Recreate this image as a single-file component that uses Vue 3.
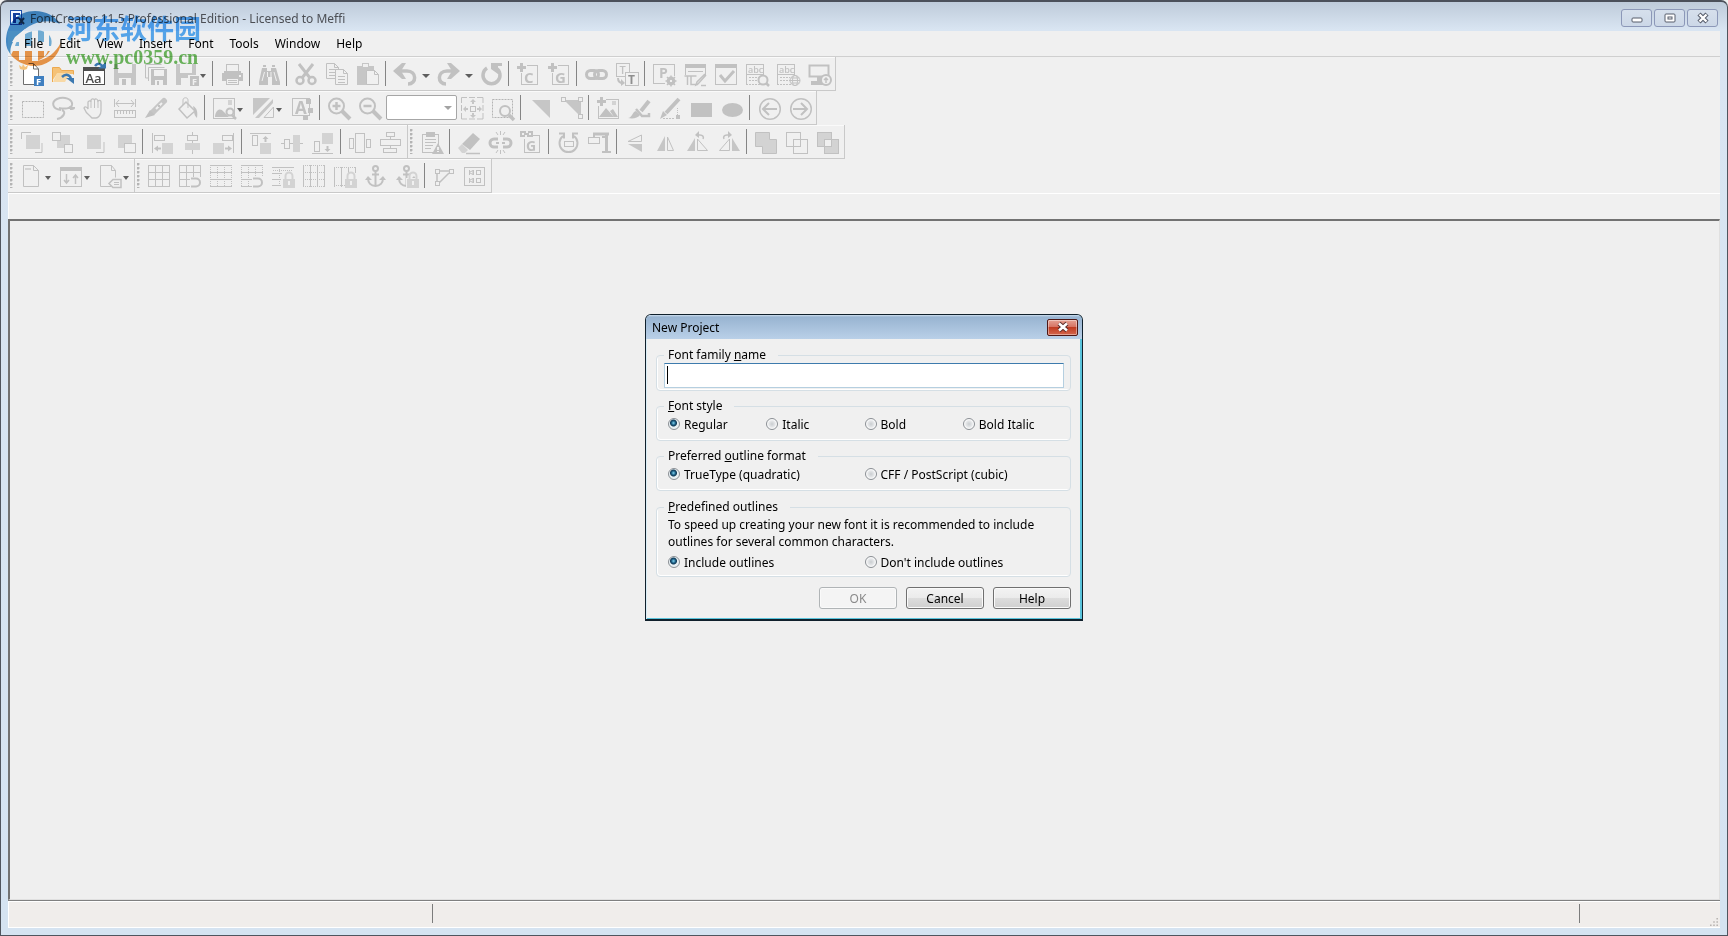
<template>
  <div class="window">
    <header class="titlebar">
      <svg class="app-icon" viewBox="0 0 16 16" aria-hidden="true">
        <rect x="0.5" y="0.5" width="11" height="14" fill="#f4f8ff" stroke="#1d4fa8" />
        <path d="M3 3h7v2H6v2h3v2H6v4H3z" fill="#12409c" />
        <path d="M9 8l5 6M14 8l-5 6" stroke="#2b3f55" stroke-width="2" />
      </svg>
      <h1>FontCreator 11.5 Professional Edition - Licensed to Meffi</h1>
      <div class="caption-buttons">
        <button v-for="c in captions" :key="c.label" type="button" :aria-label="c.label">
          <svg viewBox="0 0 14 12" aria-hidden="true" v-html="c.art"></svg>
        </button>
      </div>
    </header>

    <div class="client">
      <nav class="menubar" aria-label="Main menu">
        <button v-for="m in menus" :key="m" type="button">{{ m }}</button>
      </nav>

      <div v-for="(row, r) in rows" :key="r" class="toolbar-row">
        <div v-for="(bar, b) in row" :key="b" class="toolbar" role="toolbar">
          <span class="grip"></span>
          <template v-for="(item, i) in bar" :key="i">
            <span v-if="item === '|'" class="sep"></span>
            <span v-else-if="item === 'zoomBox'" class="zoom-box">
              <select v-model="zoomLevel" aria-label="Zoom level">
                <option value=""></option>
                <option value="100">100%</option>
              </select>
            </span>
            <button
              v-else
              type="button"
              :class="['tool', { drop: item.endsWith('>'), wide: item.endsWith('>>') }]"
              :aria-label="iconName(item)"
            >
              <svg class="glyph" viewBox="0 0 23 23" aria-hidden="true" v-html="icons[iconName(item)]"></svg>
            </button>
          </template>
        </div>
      </div>

      <div class="tab-strip"></div>
      <main class="workspace"></main>

      <footer class="statusbar">
        <span class="pane first"></span>
        <span class="pane middle"></span>
        <span class="pane last"></span>
        <svg class="size-grip" viewBox="0 0 10 10" aria-hidden="true">
          <path d="M8 0h2v2H8zM8 4h2v2H8zM4 4h2v2H4zM8 8h2v2H8zM4 8h2v2H4zM0 8h2v2H0z" fill="#b9b5b2" />
        </svg>
      </footer>
    </div>

    <div class="overlay">
      <form class="dialog" role="dialog" aria-labelledby="dialog-title" @submit.prevent>
        <div class="dialog-title">
          <h2 id="dialog-title">New Project</h2>
          <button type="button" class="dialog-close" aria-label="Close">
            <svg viewBox="0 0 14 12" aria-hidden="true">
              <path d="M3 2.5l8 7M11 2.5l-8 7" stroke="#5a2a28" stroke-width="4.4" />
              <path d="M3 2.5l8 7M11 2.5l-8 7" stroke="#fff" stroke-width="2.6" />
            </svg>
          </button>
        </div>
        <div class="dialog-body">
          <fieldset class="name-group">
            <legend><label for="family">Font family <u>n</u>ame</label></legend>
            <div class="name-field">
              <input id="family" v-model="family" type="text" />
            </div>
          </fieldset>

          <fieldset>
            <legend><u>F</u>ont style</legend>
            <div class="radios four">
              <label v-for="s in styles" :key="s"><input v-model="style" type="radio" name="style" :value="s" />{{ s }}</label>
            </div>
          </fieldset>

          <fieldset>
            <legend>Preferred <u>o</u>utline format</legend>
            <div class="radios two">
              <label v-for="f in formats" :key="f"><input v-model="format" type="radio" name="format" :value="f" />{{ f }}</label>
            </div>
          </fieldset>

          <fieldset class="outline-group">
            <legend><u>P</u>redefined outlines</legend>
            <p>To speed up creating your new font it is recommended to include outlines for several common characters.</p>
            <div class="radios two">
              <label v-for="o in outlineChoices" :key="o"><input v-model="outlines" type="radio" name="outlines" :value="o" />{{ o }}</label>
            </div>
          </fieldset>

          <div class="actions">
            <button type="submit" :disabled="!family">OK</button>
            <button type="button">Cancel</button>
            <button type="button">Help</button>
          </div>
        </div>
      </form>
    </div>

    <div class="watermark">
      <svg class="wm-logo" viewBox="0 0 56 56" aria-hidden="true">
        <path d="M0 31C0 12 12 0 29 0c11 0 20 5 25 13-12-6-30-2-40 10C8 30 4 38 5 44 2 40 0 36 0 31z" fill="#2f86c6" />
        <path d="M5 44C2 34 12 20 27 15c12-4 24-1 27 7 2 9-6 21-20 26 8-6 13-14 11-20-3-7-15-6-24 1C13 34 9 41 11 48z" fill="#fff" />
        <path d="M10 32C15 24 26 18 36 20c8 2 11 8 9 15H9z" fill="#5fa9da" />
        <path d="M7 40h37c-3 5-8 8-13 10 10-2 19-8 24-19-1 13-12 24-27 24C18 55 9 49 5 44z" fill="#f08a2c" />
        <path d="M9 26l10-8v31h-6V31H6zM26 18h6v13h6V20h5v16c-1 5-3 8-5 10V38h-6v12h-6z" fill="#fff" />
      </svg>
      <div class="wm-text">
        <strong>河东软件园</strong>
        <span>www.pc0359.cn</span>
      </div>
    </div>
  </div>
</template>

<script setup>
import { ref } from "vue";

const family = ref("");
const style = ref("Regular");
const format = ref("TrueType (quadratic)");
const outlines = ref("Include outlines");
const zoomLevel = ref("");

const menus = ["File", "Edit", "View", "Insert", "Font", "Tools", "Window", "Help"];
const styles = ["Regular", "Italic", "Bold", "Bold Italic"];
const formats = ["TrueType (quadratic)", "CFF / PostScript (cubic)"];
const outlineChoices = ["Include outlines", "Don't include outlines"];

const DARK = "#c1c1c1";
const LIGHT = "#d3d3d3";
const BG = "#f0f0f0";

// small builders for the icon markup: fill, stroke, rectangle, letter
const f = (d, c = DARK) => `<path d="${d}" fill="${c}"/>`;
const s = (d, w = 1, c = DARK, extra = "") => `<path d="${d}" fill="none" stroke="${c}" stroke-width="${w}" ${extra}/>`;
const box = (x, y, w, h, fill = "none", c = DARK) =>
  `<rect x="${x + 0.5}" y="${y + 0.5}" width="${w - 1}" height="${h - 1}" fill="${fill}" stroke="${c}"/>`;
const letter = (t, x, y, size, c = DARK, weight = 700) =>
  `<text x="${x}" y="${y}" font-size="${size}" font-weight="${weight}" font-family="Open Sans, sans-serif" fill="${c}">${t}</text>`;
const dash = 'stroke-dasharray="2 1"';
const dots = 'stroke-dasharray="1 1"';

const lock = f("M11 14h12v9H11z", LIGHT) + s("M13.5 14v-3a3.500 3.500 0 0 1 7 0v3", 2, LIGHT) + f("M16 16h2v4h-2z", BG);
const magnet = f("M11 12h12v11H11z", BG) + s("M12 13.500h5a4 4 0 0 1 0 8h-5", 2);
const anchor = (x) =>
  `<g transform="translate(${x} 0)">` +
  s("M10.5 6v15M7 9.500h7", 2) + s("M3 13c0 5 3 8 7.500 8s7.500-3 7.500-8", 2) +
  `<circle cx="10.500" cy="3.500" r="2.500" fill="none" stroke="${DARK}" stroke-width="2"/>` +
  f("M0 15l3-4 4 4zM14 15l4-4 3 4z") + "</g>";
const rows5 = "M0 .5h22M0 7.500h22M0 14.500h22M0 21.500h22";
const cols5 = "M.5 0v22M7.500 0v22M14.500 0v22M21.500 0v22";
const lens = (x, y, r) => `<circle cx="${x}" cy="${y}" r="${r}" fill="${BG}" stroke="${DARK}" stroke-width="2"/>`;
const page = "M2.500 .5h10l5 5v16h-15zM12.500 .5v5h5";
const plus = f("M3 0h3v3h3v3H6v3H3V6H0V3h3z");

const icons = {
  New:
    `<path d="M2.500 4v17.500h15V6l-5-5.500h-5" fill="#fff" stroke="#6d6d6d"/>` + s("M12.500 1v5h5", 1, "#6d6d6d") +
    f("M13 13h10v10H13z", "#3f7fc0") + letter("F", 15, 21.500, 9.500, "#fff") +
    f("M-2 2l3 2 1-3 2 3 3-2-1 4-3 1-4-1z", "#f3c27c"),
  Open:
    f("M0 5h8l2 3h11v3H5L0 18z", "#f5c277") + f("M5 10h13l-5 9H1z", "#f8d9a6") + s("M.5 19V4.500h7l2 3h12v4", 1, "#eda94e") +
    s("M10 14c4-4 8-2 9 2", 2.500, "#3b78b0") + f("M14 15h8v6z", "#3b78b0"),
  "Font Overview":
    `<rect x=".5" y="5.500" width="21" height="16" fill="#fff" stroke="#4d4d4d"/>` + f("M0 4h22v4H0z", "#4d4d4d") +
    letter("Aa", 2.500, 20, 13, "#4d4d4d", 600) + s("M12 3c3-4 6-2 8 1", 2.500, "#3b78b0") + f("M15 5.500h8V-1z", "#3b78b0"),
  Save: f("M0 1h22v21H0z", "#c6c6c6") + f("M4 1h14v9H4zM5 15h12v7H5z", BG) + f("M8 16h4v6H8z"),
  "Save All":
    s("M.5 15V1.500h16M3.500 18V4.500h16M.5 15h3") + f("M6 6h16v16H6z") + f("M9 7h10v6H9zM10 17h8v5h-8z", BG) + f("M12 18h2v4h-2z"),
  "Export Font":
    f("M0 1h20v21H0z", "#c6c6c6") + f("M4 1h12v9H4zM5 15h8v7H5z", BG) + f("M12 12h11v11H12z", BG) + f("M14 13h9v10h-9z") + letter("F", 16, 21.500, 9, BG),
  Print:
    box(5, 1, 13, 8) + f("M3 8h17v3H3zM1 10h21v8h-4v-3H5v3H1z") + box(5, 15, 13, 7, BG) + s("M7 17.500h9M7 19.500h9") + f("M18 12h2v2h-2z", BG),
  Find:
    f("M4 5h5v3h4V5h5l4 14v3h-8v-8h-4v8H1v-3z") + f("M5 2h3v2H5zM14 2h3v2h-3z") + s("M6.500 9L4 18M16 9l2.500 9M9.500 9v5M13 9v5", 1, BG),
  Cut:
    s("M4 1l11 14M18 1L7 15", 3) +
    `<circle cx="5" cy="17.500" r="3.500" fill="none" stroke="${DARK}" stroke-width="2.500"/><circle cx="17" cy="17.500" r="3.500" fill="none" stroke="${DARK}" stroke-width="2.500"/>`,
  Copy:
    s("M.5 .5h8l4 4v11H.5zM8.500 .5v4h4M3 6.500h7M3 9.500h7M3 12.500h7") +
    `<path d="M9.500 6.500h8l4 4v11h-12z" fill="${BG}" stroke="${DARK}"/>` + s("M17.500 6.500v4h4M12 13.500h7M12 16.500h7M12 19.500h7"),
  Paste:
    f("M0 3h5V0h7v3h5v19H0z", "#c6c6c6") + f("M6 1h5v3H6z", BG) + `<path d="M9.500 7.500h8l4 4v10h-12z" fill="${BG}" stroke="${DARK}"/>` + s("M17.500 7.500v4h4"),
  Undo: s("M4 8h9c10 0 10 13 1 13", 3.5) + f("M-1 8l9-8h4L7 8l5 8H8z"),
  Redo: s("M18 8H10C0 8 0 21 9 21", 3.5) + f("M23 8L14 0h-4l5 8-5 8h4z"),
  Repeat: s("M7 5a8.500 8.500 0 1 0 9 0", 3.5) + f("M11 0h11v3h-4v8l-7-5z"),
  "Add Character": box(4, 2, 17, 20) + f("M0 0h10v10H0z", BG) + plus + letter("C", 7, 20, 15),
  "Add Glyph": box(4, 2, 17, 20) + f("M0 0h10v10H0z", BG) + plus + letter("G", 7, 20, 15),
  Link:
    `<rect x="1.500" y="7.500" width="12" height="8" rx="4" fill="none" stroke="${DARK}" stroke-width="3"/><rect x="9.500" y="7.500" width="12" height="8" rx="4" fill="none" stroke="${DARK}" stroke-width="3"/>`,
  Transform:
    box(0, 0, 14, 14) + letter("T", 3.500, 11, 11, DARK, 600) + box(9, 9, 14, 14, BG) + letter("T", 12, 21, 12, "#8f8f8f") +
    s("M2 15c0 4 3 5 5 5", 2) + f("M5 16l4 4-4 3z"),
  "Font Properties":
    box(0, 1, 22, 20) + letter("P", 6, 15, 14) + f("M12 13h11v10H12z", BG) +
    `<circle cx="18" cy="18" r="3.200" fill="none" stroke="${DARK}" stroke-width="2.400"/>` + s("M18 12.500v11M12.500 18h11M14 14l8 8M22 14l-8 8", 1.500) + f("M17 17h2v2h-2z", BG),
  Rename: box(1, 1, 21, 20) + f("M1 1h21v4H1z") + s("M4 8.500h15") + f("M0 12h23v11H0z", BG) + s("M3.500 13v9M.5 13h6M12.500 13H7v8.500h7M22 12L14 21l-2 1 1-3 8-8M17 22.500h5", 1.500),
  Validate: box(0, 1, 22, 21) + f("M0 1h22v4H0z") + s("M5 12l5 6 9-10", 3),
  "Text Preview":
    box(0, 1, 18, 11) + letter("abc", 2, 10, 9, DARK, 600) + s("M.5 12v9M17.500 12v3") + s("M3 14.500h10M3 17.500h10M0 21.500h15", 1, DARK, dash) +
    lens(17, 17, 4.500) + s("M20 20l3 3", 2.500),
  "Web Preview":
    box(0, 1, 18, 11) + letter("abc", 2, 10, 9, DARK, 600) + s("M.5 12v9") + s("M3 14.500h10M3 17.500h10M0 21.500h15", 1, DARK, dash) +
    `<circle cx="18" cy="17.500" r="5" fill="${BG}" stroke="${DARK}"/><ellipse cx="18" cy="17.500" rx="2.500" ry="5" fill="none" stroke="${DARK}"/>` + s("M13 17.500h10M14 15h8M14 20h8"),
  Install: s("M1.500 2.500h19v11h-19z", 2) + f("M9 14h4v5H9zM3 18h12v4H3z") + `<circle cx="18" cy="17" r="5" fill="${BG}" stroke="${DARK}" stroke-width="2"/>` + s("M18 20v-5M16 17l2-2 2 2", 1.500),

  "Select Rectangle": s("M1.500 4.500h21v16h-21z", 1, "#b4b4b4", dash),
  Lasso: s("M9 13C0 12-1 5 5 2c7-3 16 0 15 6-1 4-8 4-13 3M20 9c-2 1-3 1-2 2l4 0c0 1-2 1-4 1M10 13c5 2 1 8-5 9", 2),
  Pan: `<path d="M7 19C3 16 2 14 1 11c1-2 3-1 4 1V5c1-2 3-1 3 0V3c1-2 3-1 3.500 0 1-2 3-1 3.500 1 1-1 3-1 3 1v9c0 4-3 7-5 7H9z" fill="${BG}" stroke="${DARK}" stroke-width="1.300"/>` + s("M8 5v6M11.500 3v8M15 4v7"),
  Measure: s("M.5 2v8M21.500 2v8M2 6.500h18M5 3L2 6.500 5 10M17 3l3 3.500-3 3.500") + box(0, 13, 22, 8) + s("M3.500 14v3M6.500 14v3M9.500 14v3M12.500 14v3M15.500 14v3M18.500 14v3"),
  Knife: s("M8 15L19 4", 6, "#c6c6c6", 'stroke-linecap="round"') + f("M0 21l5-8 5 5z") + s("M11 12l6-6", 2, BG) + f("M13 8h2v2h-2z"),
  Fill: s("M3 12l7-7 9 9-8 7z", 1.500) + s("M7 8V3c0-3 5-3 5 0v8") + f("M17 9c4 2 5 6 4 12-2-2-3-4-3-7z"),
  "Background Image": box(0, 1, 22, 21) + f("M2 19c1-6 5-9 9-4l5 5H2z") + f("M15 3h4v5h-4z", LIGHT) + lens(17, 15, 3.500) + s("M19 18l4 4", 2.500),
  "Fill Mode": f("M1 1h17L1 18zM3 21L21 2v4L7 21z", "#c6c6c6") + s("M12 20.500h9.500V10z"),
  "Glyph Outline": box(1, 1, 18, 18) + letter("A", 4, 17, 17) + f("M15 2h5v5h-5zM17 11h5v5h-5zM12 18h5v5h-5z"),
  "Zoom In": lens(8.500, 9, 7.500) + s("M14 14l8 8", 4) + s("M8.500 5v8M4.500 9h8", 2.500),
  "Zoom Out": lens(8.500, 9, 7.500) + s("M14 14l8 8", 4) + s("M4.500 9h8", 2.500),
  "Zoom to Fit":
    s("M.5 6V.5H6M8 .5h6M16 .5h6V6M22 8v6M22 16v6h-6M14 22H8M6 22H.5v-6M.5 14V8") + box(9, 9, 6, 6) +
    f("M9 5l3-3 3 3h-2v2h-2V5zM9 18l3 3 3-3h-2v-2h-2v2zM5 9l-3 3 3 3v-2h2v-2H5zM18 9l3 3-3 3v-2h-2v-2h2z", "#c6c6c6"),
  "Zoom to Selection": s("M.5 2.500h20v18H.5z", 1, "#b4b4b4", dash) + lens(13, 14, 5) + s("M17 18l5 5", 3.500),
  Contour: f("M3 3h18v18z", "#c6c6c6"),
  Point: f("M4 3h17v17z", "#c6c6c6") + box(1, 0, 5, 5, BG) + box(18, 0, 5, 5, BG) + box(18, 17, 5, 5, BG),
  "Insert Image": box(1, 2, 21, 20) + f("M0 0h9v9H0z", BG) + plus + f("M2 20l7-9 8 9zM13 14l3-2 5 8h-4z") + f("M15 4h4v4h-4z", LIGHT),
  Brush: s("M21 4l-8 10", 4) + s("M8 12L14 19h7v-3", 2.5) + f("M0 21c4 0 4-6 8-7l4 4c-2 3-7 4-12 3z"),
  Pencil: s("M20 2L7 16", 4) + f("M1 22l3-8 4 4z") + s("M4 21.500h12", 1, DARK, dash) + s("M18.500 11v8", 1, DARK, dots) + f("M17 18h4v4h-4z"),
  Rectangle: f("M1 6h21v14H1z", "#c2c2c2"),
  Ellipse: `<ellipse cx="11.500" cy="13" rx="10.500" ry="7" fill="#c2c2c2"/>`,
  Previous: `<circle cx="12" cy="12" r="10.300" fill="none" stroke="${DARK}" stroke-width="1.500"/>` + s("M19 12H5M11 6l-6 6 6 6", 2),
  Next: `<circle cx="12" cy="12" r="10.300" fill="none" stroke="${DARK}" stroke-width="1.500"/>` + s("M4 12h14M12 6l6 6-6 6", 2),

  "Bring to Front": f("M5 4h14v14H5z", LIGHT) + s("M.5 8V1.500H10M14 21.500h7V12"),
  "Bring Forward": f("M5 4h13v13H5z", LIGHT) + box(0, 1, 9, 9, BG) + box(12, 13, 9, 9, BG),
  "Send Backward": f("M4 4h14v14H4z", LIGHT) + s("M13 21.500h8V11"),
  "Send to Back": f("M4 4h14v13H4z", LIGHT) + box(10, 12, 12, 10, BG),
  "Align Left": s("M1.500 2v20") + box(3, 4, 11, 6) + f("M11 12h11v11H11z", LIGHT) + f("M3 17.500l4-3v2h3v2H7v2z"),
  "Align Center": s("M10.500 1v22") + box(5, 4, 11, 6, BG) + f("M3 12h15v7H3z", LIGHT),
  "Align Right": s("M20.500 2v20") + box(9, 4, 11, 6) + f("M0 12h11v11H0z", LIGHT) + f("M19 17.500l-4-3v2h-3v2h3v2z"),
  "Align Top": s("M0 2.500h21") + box(2, 4, 6, 11) + f("M10 12h11v11H10z", LIGHT) + f("M15.500 5l3 3h-2v3h-2V8h-2z"),
  "Align Middle": s("M0 12.500h22") + box(3, 8, 6, 10, BG) + f("M12 4h7v17h-7z", LIGHT),
  "Align Bottom": s("M0 22.500h21") + box(2, 10, 6, 11) + f("M10 2h11v11H10z", LIGHT) + f("M15.500 21l3-3h-2v-3h-2v3h-2z"),
  "Distribute Horizontally": box(0, 7, 5, 11) + box(6, 2, 10, 20) + box(17, 8, 5, 9),
  "Distribute Vertically": box(6, 1, 9, 5) + box(0, 8, 21, 7) + box(3, 17, 14, 5) + s("M10.500 5v3M10.500 15v2"),
  Report:
    box(1, 3, 17, 19) + f("M5 1h9v5H5z") + s("M4 8.500h11M4 11.500h11M4 14.500h8M4 17.500h6") + f("M11 23l6-11 6 11z") + f("M16 16h2v3h-2zM16 20h2v1h-2z", BG),
  Erase: f("M4 13L15 2l7 6-10 11z") + f("M0 17l4-4 6 6-3 3H4z", LIGHT) + s("M8 22.500h14", 1.500),
  Unlink:
    s("M9 8H5a4 4 0 0 0 0 8h4M14 8h4a4 4 0 0 1 0 8h-4", 3) + s("M7 12h3M13 12h3", 2) + s("M11.500 0v4M7 1l2 3M16 1l-2 3M11.500 19v4M7 22l2-3M16 22l-2-3"),
  "Link Glyph": box(4, 4, 16, 18) + f("M0 0h13v8H0z", BG) + s("M5 5H1V1h5M7 5h5V1H8M4 3h5", 2) + letter("G", 6, 20, 14),
  "Optimize Rotation": s("M6 5a9 9 0 1 0 11 0", 2) + s("M2 2.500h5v5M21 2.500h-5v5", 2) + box(7, 10, 10, 6, BG),
  Clamp: s("M5 3h16M18.500 2v20", 3) + s("M6 2v4M14 6h3", 2) + box(0, 6, 12, 7, BG) + f("M14 20h9v2h-9z"),
  "Flip Vertical": s("M3 10.500L16.500 4v6.500z") + f("M3 13h14v8z", "#c6c6c6"),
  "Flip Horizontal": f("M1 20h8V5z", "#c6c6c6") + s("M11.500 6v13.500h6z"),
  "Rotate Left": f("M0 20h8V7z", "#c6c6c6") + s("M10.500 8v11.500h10z") + s("M11 4h2c3 0 4 2 3 4", 1.500) + f("M8 4l4-4v7z"),
  "Rotate Right": f("M22 20h-8V7z", "#c6c6c6") + s("M11.500 8v11.500h-10z") + s("M11 4H9C6 4 5 6 6 8", 1.500) + f("M14 4l-4-4v7z"),
  Union: `<path d="M.5 1.500h14v7h7v14h-14v-7h-7z" fill="${LIGHT}" stroke="${DARK}"/>`,
  Intersection: box(0, 1, 15, 15) + box(7, 8, 15, 15) + box(7, 8, 8, 8, BG),
  Exclusion: box(0, 1, 15, 15, LIGHT) + box(7, 8, 15, 15, LIGHT) + box(7, 8, 8, 8, BG),

  "Page Template": s(page) + f("M4 3h6v2H4z", LIGHT),
  Metrics: box(0, 2, 22, 20) + f("M0 2h22v4H0z") + s("M6.500 9v9M4 15l2.500 3L9 15M15.500 19v-9M13 13l2.500-3 2.500 3", 1.500),
  Tags: s("M12 21.500H1.500V.5h11l4 5v7M12.500 .5v5h4") + `<path d="M10 18.500l4-4h8v8h-8z" fill="${BG}" stroke="${DARK}" stroke-width="1.500"/>` + s("M15 17.500h5M15 19.500h5"),
  Grid: s(rows5 + cols5),
  "Snap to Grid": s(rows5 + cols5) + magnet,
  Guidelines: s(rows5) + s(cols5, 1, DARK, dots),
  "Snap to Guidelines": s(rows5) + s(cols5, 1, DARK, dots) + magnet,
  "Lock Guidelines": s("M0 2.500h22M0 8.500h10M0 14.500h9M0 20.500h9") + s("M7.500 2v20M1 5.500h20", 1, DARK, dots) + lock,
  "Vertical Guides": s(cols5) + s("M0 .5h22M0 7.500h22M0 14.500h22M0 21.500h22", 1, DARK, dots),
  "Lock Vertical": s("M.5 2v20M7.500 2v20M14.500 2v6M21.500 2v6") + s("M0 2.500h22M0 20.500h11", 1, DARK, dots) + lock,
  Anchor: anchor(0),
  "Lock Anchors": anchor(0) + f("M10 13h13v10H10z", BG) + lock,
  Nodes: s("M4 8v10M6 6h11M16 8L6 18", 1.500) + box(2, 4, 5, 5, BG) + box(16, 4, 5, 5, BG) + box(2, 16, 5, 5, BG),
  "Glyph Map": box(0, 2, 21, 19) + box(12, 5, 5, 5) + box(12, 13, 5, 5) + s("M5.500 5v5M9.500 5v5M5.500 13v5M9.500 13v5M5 7.500l4-2v4zM5 15.500l4-2v4z"),
};

// ">" adds a drop-down arrow to the tool, ">>" gives that arrow more room
const rows = [
  [["New", "Open", "Font Overview", "Save", "Save All", "Export Font>", "|", "Print", "|", "Find", "|", "Cut", "Copy", "Paste", "|",
    "Undo>>", "Redo>>", "Repeat", "|", "Add Character", "Add Glyph", "|", "Link", "Transform", "|",
    "Font Properties", "Rename", "Validate", "Text Preview", "Web Preview", "Install"]],
  [["Select Rectangle", "Lasso", "Pan", "Measure", "Knife", "Fill", "|", "Background Image>", "Fill Mode>", "Glyph Outline", "|",
    "Zoom In", "Zoom Out", "zoomBox", "Zoom to Fit", "Zoom to Selection", "|", "Contour", "Point", "|",
    "Insert Image", "Brush", "Pencil", "Rectangle", "Ellipse", "|", "Previous", "Next"]],
  [["Bring to Front", "Bring Forward", "Send Backward", "Send to Back", "|", "Align Left", "Align Center", "Align Right", "|",
    "Align Top", "Align Middle", "Align Bottom", "|", "Distribute Horizontally", "Distribute Vertically"],
   ["Report", "|", "Erase", "Unlink", "Link Glyph", "|", "Optimize Rotation", "Clamp", "|",
    "Flip Vertical", "Flip Horizontal", "Rotate Left", "Rotate Right", "|", "Union", "Intersection", "Exclusion"]],
  [["Page Template>", "Metrics>", "Tags>"],
   ["Grid", "Snap to Grid", "Guidelines", "Snap to Guidelines", "Lock Guidelines", "Vertical Guides", "Lock Vertical", "Anchor",
    "Lock Anchors", "|", "Nodes", "Glyph Map"]],
];

function iconName(item) {
  return item.replace(/>+$/, "");
}

const captions = [
  { label: "Minimize", art: `<rect x="2" y="6" width="10" height="4" rx="1" fill="#fff" stroke="#565d6b"/>` },
  { label: "Restore", art: `<rect x="2" y="2" width="10" height="8" rx="1" fill="#fff" stroke="#565d6b"/><rect x="5" y="5" width="4" height="2" fill="#fff" stroke="#565d6b"/>` },
  { label: "Close", art: s("M3 2l8 8M11 2l-8 8", 4.5, "#565d6b") + s("M3.500 2.500l7 7M10.500 2.500l-7 7", 2.4, "#fff") },
];
</script>

<style>
body { background: #f0f0f0; }
</style>

<style scoped>
.window { position: relative; display: flex; flex-direction: column; box-sizing: border-box; min-height: 100vh; padding: 0 7px 7px; border: 1px solid #50555e; border-top: 2px solid #4b505a; border-radius: 7px 7px 0 0; background: linear-gradient(#becbda 0, #d9e5f2 28px, #d5e3f1 100%); color: #000; font-family: "Noto Sans", "Noto Sans CJK SC", sans-serif; font-size: 12px; line-height: 17px; }
button, input, select { font: inherit; color: inherit; }

.titlebar { display: flex; align-items: center; height: 29px; padding: 3px 2px 0 2px; box-sizing: border-box; }
.app-icon { width: 16px; height: 16px; margin-right: 4px; }
.titlebar h1 { flex: 1; margin: 0; color: #4c4f55; font-size: 12px; font-weight: 400; }
.caption-buttons { display: flex; gap: 2px; }
.caption-buttons button { display: flex; align-items: center; justify-content: center; width: 31px; height: 18px; padding: 0; border: 1px solid #8c98b8; border-radius: 3px; background: linear-gradient(#d6e0ec, #ccd8e7); }
.caption-buttons svg { width: 14px; height: 12px; }

.client { display: flex; flex: 1; flex-direction: column; background: #f0f0f0; }
.menubar { display: flex; height: 26px; padding-left: 8px; border-bottom: 1px solid #cfcfcf; box-sizing: border-box; background: #f0f0f0; }
.menubar button { padding: 4px 8px; border: 0; background: none; }

.toolbar-row { display: flex; }
.toolbar { display: flex; height: 34px; box-sizing: border-box; border: solid #c9c9c9; border-width: 0 1px 1px 0; box-shadow: inset 0 1px #fafafa; }
.grip { width: 3px; margin: 4px 4px 4px 2px; background: radial-gradient(circle at 1px 1px, #b4b4b4 1px, transparent 2px) 0 0 / 3px 4px; }
.sep { width: 1px; margin: 4px 4px 4px 1px; background: #858585; }
.tool { display: flex; align-items: flex-start; width: 31px; padding: 6px 0 0 4px; border: 0; background: none; }
.glyph { flex: none; width: 23px; height: 23px; overflow: visible; }
.drop { width: 39px; }
.drop::after { flex: none; margin: 11px 0 0 1px; border: solid transparent; border-width: 4px 3px 0; border-top-color: #5e5e5e; content: ""; }
.wide { width: 43px; }
.wide::after { margin-left: 5px; border-width: 4px 4px 0; }
.zoom-box { position: relative; width: 71px; padding-top: 4px; }
.zoom-box select { width: 71px; height: 25px; border: 1px solid #a6a6a6; border-radius: 2px; background: #fff; appearance: none; }
.zoom-box::after { position: absolute; top: 15px; right: 5px; border: solid transparent; border-width: 4px 4px 0; border-top-color: #a3a3a3; content: ""; pointer-events: none; }

.tab-strip { height: 26px; box-sizing: border-box; border-top: 1px solid #fff; border-left: 1px solid #fafafa; }
.workspace { flex: 1; border-top: 2px solid #727272; border-left: 2px solid #727272; border-right: 1px solid #e0e0e0; border-bottom: 1px solid #e0e0e0; background: #efefef; }
.statusbar { position: relative; display: flex; height: 28px; box-sizing: border-box; border-top: 1px solid #808080; border-bottom: 1px solid #fff; background: #f0edeb; box-shadow: inset 1px 1px #fff; }
.pane { margin: 3px 0 4px; box-sizing: border-box; }
.first { width: 425px; border-right: 1px solid #7c7c7c; }
.middle { flex: 1; border-right: 1px solid #7c7c7c; }
.last { width: 140px; }
.size-grip { position: absolute; right: 2px; bottom: 1px; width: 8px; height: 8px; }

.overlay { position: absolute; inset: 0; display: flex; align-items: center; justify-content: center; padding-bottom: 2px; }
.dialog { width: 438px; box-sizing: border-box; border: 1px solid #10202c; border-bottom-width: 2px; border-radius: 6px 6px 0 0; background: #f0f0f0; box-shadow: inset 1px 0 #d8edf6, inset -2px 0 #5ac4dc, inset 0 -1px #5ac4dc; }
.dialog-title { display: flex; align-items: center; justify-content: space-between; height: 24px; padding: 0 4px 0 6px; border-radius: 5px 5px 0 0; background: linear-gradient(#cfdfee 0, #98b4d1 2px, #b9d0e8 100%); }
.dialog-title h2 { margin: 0; font-size: 12px; font-weight: 400; }
.dialog-close { display: flex; align-items: center; justify-content: center; width: 31px; height: 17px; padding: 0; border: 1px solid #4e1715; border-radius: 2px; background: linear-gradient(#e5a294 0, #d67464 45%, #c03c22 50%, #d4674e 100%); box-shadow: inset 0 0 0 1px rgba(255, 255, 255, 0.4); }
.dialog-close svg { width: 14px; height: 12px; }
.dialog-body { padding: 8px 11px 10px 10px; }

fieldset { min-width: 0; margin: 0 0 7px; padding: 0 6px 6px 7px; border: 1px solid #d5dfe5; border-radius: 4px; box-shadow: inset 1px -1px #fff; }
legend { height: 16px; margin: 0; padding: 0 12px 0 4px; line-height: 16px; }
.name-group { padding-bottom: 2px; }
.name-field { position: relative; }
.name-field input { display: block; width: 100%; height: 25px; box-sizing: border-box; padding: 0 4px; border: 1px solid #b5cfe0; border-top-color: #3d7bad; outline: 0; background: #fff; }
.name-field::after { position: absolute; top: 3px; left: 3px; width: 1px; height: 18px; background: #000; content: ""; }
.name-field:focus-within::after { display: none; }
.radios { display: grid; padding: 0 3px 0 4px; }
.four { grid-template-columns: repeat(4, 1fr); }
.two { grid-template-columns: repeat(2, 1fr); }
.radios label { display: flex; align-items: center; height: 20px; white-space: nowrap; }
.radios input { width: 12px; height: 12px; margin: 0 4px 0 0; border: 1px solid #8a8f94; border-radius: 50%; appearance: none; background: radial-gradient(circle, #c9cdd0 0, #e4e6e8 3px, #fff 5px); }
.radios input:checked { background: radial-gradient(circle at 45% 40%, #7fd4f0 0, #1d5f86 2px, #103a56 3px, #e8f0f4 4px); }
.outline-group { padding-bottom: 4px; margin-top: 8px; }
.outline-group p { margin: 0; padding: 1px 4px 2px; }
.actions { display: flex; justify-content: flex-end; gap: 9px; margin-top: 10px; }
.actions button { width: 78px; height: 22px; padding: 0; border: 1px solid #707070; border-radius: 3px; background: linear-gradient(#f3f3f3 0, #ebebeb 50%, #dddddd 51%, #cfcfcf 100%); box-shadow: inset 0 0 0 1px #fafafa; }
.actions button:disabled { border-color: #b0b4b6; background: #f4f4f4; color: #8a8a8a; }

.watermark { position: absolute; top: 9px; left: 5px; display: flex; pointer-events: none; opacity: 0.85; mix-blend-mode: multiply; }
.wm-logo { width: 56px; height: 56px; }
.wm-text { display: flex; flex-direction: column; padding-left: 4px; white-space: nowrap; }
.wm-text strong { color: #3c9ff5; font-family: "Noto Sans CJK SC", sans-serif; font-size: 27px; line-height: 34px; }
.wm-text span { color: #55b043; font-family: "Liberation Serif", serif; font-size: 20px; font-weight: 700; line-height: 24px; }
</style>
